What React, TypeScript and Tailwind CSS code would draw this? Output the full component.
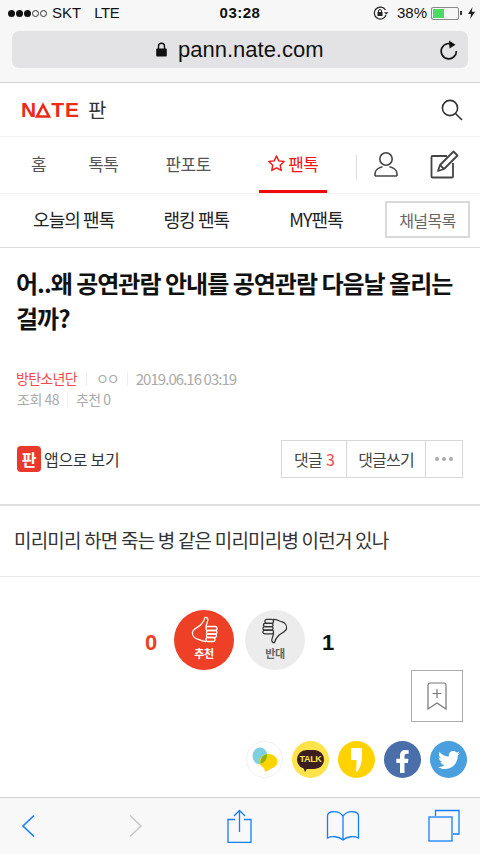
import { FaFacebookF, FaTwitter } from "react-icons/fa";

const KR = "[font-family:'Noto_Sans_CJK_KR','Liberation_Sans',sans-serif]";

function StatusBar() {
  return (
    <div className="flex h-[26px] items-center justify-between pl-[8px] pr-[5px] text-[15px] text-[#111] [font-family:'Liberation_Sans',sans-serif]">
      <div className="flex w-[180px] items-center">
        <div className="flex items-center gap-[1px]">
          {[0, 1, 2].map((i) => (
            <span key={i} className="h-[7px] w-[7px] rounded-full bg-[#111]" />
          ))}
          {[0, 1].map((i) => (
            <span key={i} className="h-[7px] w-[7px] rounded-full border border-[#333]" />
          ))}
        </div>
        <span className="ml-[5px]">SKT</span>
        <span className="ml-[13px] tracking-tight">LTE</span>
      </div>
      <span className="-ml-[3px] text-[15px] font-bold tracking-[0.5px]">03:28</span>
      <div className="flex w-[180px] items-center justify-end">
        <svg width="16" height="14" viewBox="0 0 16 14" fill="none">
          <path d="M12.5 4A6 6 0 1 0 13 9" stroke="#222" strokeWidth="1.2" />
          <path d="M11 6.2 L15.5 6.2 L13.2 8.6Z" fill="#222" />
          <rect x="4.5" y="6" width="5" height="4" fill="#222" />
          <path d="M5.5 6V5a1.5 1.5 0 0 1 3 0v1" stroke="#222" />
        </svg>
        <span className="ml-[8px]">38%</span>
        <div className="ml-[4px] flex h-[13px] w-[28px] items-center rounded-[2px] border border-[#8a8a8a] p-[1px]">
          <div className="h-full w-[11px] bg-[#4cd964]" />
        </div>
        <span className="ml-[1px] h-[4px] w-[2px] bg-[#333]" />
        <svg className="ml-[6px]" width="7" height="12" viewBox="0 0 7 12">
          <path d="M4.5 0 L0 7 L3 7 L2.2 12 L7 4.8 L3.8 4.8Z" fill="#222" />
        </svg>
      </div>
    </div>
  );
}

function UrlBar() {
  return (
    <div className="mx-[12px] mt-[5px] flex h-[37px] items-center rounded-[7px] bg-[#e3e3e5] pr-[10px]">
      <div className="ml-[144px] flex items-center">
        <svg width="11" height="15" viewBox="0 0 11 15">
          <path d="M2.5 7V4.2a3 3 0 0 1 6 0V7" fill="none" stroke="#111" strokeWidth="1.4" />
          <rect x="0.2" y="6.5" width="10.6" height="8" rx="1" fill="#111" />
        </svg>
        <span className="ml-[11px] text-[22px] leading-none text-[#111] [font-family:'Liberation_Sans',sans-serif]">pann.nate.com</span>
      </div>
      <svg className="ml-auto" width="18" height="20" viewBox="0 0 18 20" fill="none">
        <path d="M13.5 5.2A7.6 7.6 0 1 0 16.4 11" stroke="#111" strokeWidth="1.7" />
        <path d="M9 0.5 L15.5 4.8 L9.5 8.5Z" fill="#111" />
      </svg>
    </div>
  );
}

function MainHeader() {
  return (
    <div className="flex h-[54px] items-center justify-between border-b border-[#f2f2f2] pl-[21px] pr-[17px]">
      <div className="flex items-center">
        <div className="flex items-center text-[21px] font-bold leading-none text-[#ee2a14] [font-family:'Liberation_Sans',sans-serif]">
          <span className="tracking-[-1px]">N</span>
          <svg width="16" height="16" viewBox="0 0 16 16" fill="none" stroke="#ee2a14" strokeWidth="2.6" strokeLinejoin="miter">
            <path d="M8 3L14 14.500H2z" />
          </svg>
          <span className="tracking-[1px]">TE</span>
        </div>
        <span className={`ml-[8px] text-[20px] leading-none text-[#333] ${KR}`}>판</span>
      </div>
      <svg width="22" height="22" viewBox="0 0 22 22" fill="none">
        <circle cx="9" cy="9" r="7.6" stroke="#333" strokeWidth="1.6" />
        <path d="M14.5 14.5 L21 21" stroke="#333" strokeWidth="1.6" />
      </svg>
    </div>
  );
}

function TopNav() {
  return (
    <div className={`flex h-[56px] items-stretch text-[17px] tracking-[-0.5px] text-[#555] ${KR}`}>
      <span className="ml-[31px] flex items-center pb-[3px]">홈</span>
      <span className="ml-[42px] flex items-center pb-[3px]">톡톡</span>
      <span className="ml-[47px] flex items-center pb-[3px]">판포토</span>
      <div className="ml-[48px] flex w-[68px] items-center justify-center border-b-[3px] border-[#f00a0a] text-[#f01414]">
        <svg width="19" height="19" viewBox="0 0 24 24" fill="none" stroke="#f01414" strokeWidth="1.8" strokeLinejoin="round">
          <path d="M12 2.5l2.9 6.2 6.8.8-5 4.6 1.3 6.7-6-3.4-6 3.4 1.3-6.7-5-4.6 6.8-.8z" />
        </svg>
        <span className="ml-[2px]">팬톡</span>
      </div>
      <div className="ml-[29px] mt-[18px] h-[25px] w-px bg-[#ddd]" />
      <div className="ml-[17px] flex items-center pb-[3px]">
        <svg width="24" height="26" viewBox="0 0 24 26" fill="none" stroke="#444" strokeWidth="1.6">
          <circle cx="12" cy="8" r="6.2" />
          <path d="M1 25v-2c0-4 4-6.5 7.5-7.2M23 25v-2c0-4-4-6.5-7.5-7.2M1 25h22" />
        </svg>
      </div>
      <div className="ml-[32px] flex items-center pb-[3px]">
        <svg width="29" height="30" viewBox="0 0 29 30" fill="none" stroke="#444" strokeWidth="1.8">
          <path d="M17 7H2.5a1 1 0 0 0-1 1v19.5a1 1 0 0 0 1 1H22a1 1 0 0 0 1-1V14" />
          <path d="M8 22l2-6L23.5 2.5l4 4L14 20z" strokeLinejoin="round" />
          <path d="M10 16l4 4" />
        </svg>
      </div>
    </div>
  );
}

function SubNav() {
  return (
    <div className={`flex h-[55px] items-center border-b border-[#ddd] border-t border-t-[#f2f2f2] text-[18px] tracking-[-0.9px] text-[#222] ${KR}`}>
      <span className="mb-[3px] ml-[33px]">오늘의 팬톡</span>
      <span className="mb-[3px] ml-[49px]">랭킹 팬톡</span>
      <span className="mb-[3px] ml-[60px]">MY팬톡</span>
      <div className="mb-[2px] ml-auto mr-[10px] flex h-[37px] w-[85px] items-center justify-center border-2 border-[#d9d9d9] text-[16px] tracking-[-0.6px] text-[#666]">
        채널목록
      </div>
    </div>
  );
}

function ArticleHead() {
  return (
    <div className={`px-[16px] ${KR}`}>
      <h1 className="mt-[17px] text-[24px] font-bold leading-[35px] tracking-[-1px] text-[#111]">
        어..왜 공연관람 안내를 공연관람 다음날 올리는 걸까?
      </h1>
      <div className="mt-[33px] flex items-center text-[14px] leading-[21px] tracking-[-0.7px] text-[#aaa]">
        <span className="text-[#f04b4b]">방탄소년단</span>
        <span className="mx-[9px] h-[14px] w-px bg-[#eee]" />
        <span className="tracking-[-2px]">ㅇㅇ</span>
        <span className="ml-[9px] mr-[8px] h-[14px] w-px bg-[#eee]" />
        <span className="text-[15px] tracking-[-0.95px]">2019.06.16 03:19</span>
      </div>
      <div className="flex items-center pl-px text-[14px] leading-[21px] tracking-[-0.5px] text-[#aaa]">
        <span>조회 48</span>
        <span className="mx-[8px] h-[14px] w-px bg-[#eee]" />
        <span>추천 0</span>
      </div>
    </div>
  );
}

function ActionRow() {
  return (
    <div className={`mt-[30px] flex items-center justify-between border-b-2 border-[#e2e2e2] pb-[26px] pl-[17px] pr-[17px] ${KR}`}>
      <div className="flex items-center">
        <div className="flex h-[26px] w-[24px] items-center justify-center rounded-[4px] bg-[#e8392c] text-[16px] font-bold leading-none text-white">판</div>
        <span className="ml-[3px] text-[16px] tracking-[-0.3px] text-[#333]">앱으로 보기</span>
      </div>
      <div className="flex h-[38px] w-[182px] border border-[#d8d8d8] text-[16px] tracking-[-0.8px] text-[#444]">
        <div className="flex w-[65px] items-center justify-center border-r border-[#d8d8d8]">
          댓글<span className="ml-[4px] text-[#f04b4b]">3</span>
        </div>
        <div className="flex w-[79px] items-center justify-center border-r border-[#d8d8d8]">댓글쓰기</div>
        <div className="flex flex-1 items-center justify-center gap-[3px]">
          {[0, 1, 2].map((i) => (
            <span key={i} className="h-[4px] w-[4px] rounded-full bg-[#aaa]" />
          ))}
        </div>
      </div>
    </div>
  );
}

function VoteRow() {
  return (
    <div className={`ml-[145px] mt-[33px] flex items-center ${KR}`}>
      <span className="mt-[6px] w-[29px] text-[22px] font-bold leading-none text-[#ee4026] [font-family:'Liberation_Sans',sans-serif]">0</span>
      <div className="flex h-[60px] w-[60px] flex-col items-center rounded-full bg-[#ee4026] pt-[6px]">
        <svg width="27" height="28" viewBox="0 0 27 28" fill="none" stroke="#fff" strokeWidth="1.3" strokeLinejoin="round" strokeLinecap="round">
          <path d="M15 10.500l1.800-6c.5-2-1-3.500-2.800-3-.5 3-2.500 5.500-4.500 7.500S2 13 1.500 16c-.5 3 1.500 6 4.500 7 3 .5 5 2.500 9 2.500" />
          <rect x="15" y="10.500" width="11" height="4" rx="2" />
          <rect x="15.500" y="14.500" width="10.500" height="3.500" rx="1.700" />
          <rect x="15.500" y="18" width="10" height="3.500" rx="1.700" />
          <rect x="15" y="21.500" width="9" height="4" rx="2" />
        </svg>
        <span className="mt-[3px] text-[11px] font-bold leading-[13px] tracking-[-0.3px] text-white">추천</span>
      </div>
      <div className="ml-[11px] flex h-[60px] w-[60px] flex-col items-center rounded-full bg-[#ececec] pt-[6px]">
        <svg width="26" height="29" viewBox="0 0 27 28" fill="none" stroke="#333" strokeWidth="1.3" strokeLinejoin="round" strokeLinecap="round">
          <path d="M12 17.500l-1.800 6c-.5 2 1 3.500 2.800 3 .5-3 2.500-5.500 4.500-7.500s7.500-4 8-7c.5-3-1.500-6-4.500-7-3-.5-5-2.500-9-2.500" />
          <rect x="1" y="13.500" width="11" height="4" rx="2" />
          <rect x="1" y="10" width="10.500" height="3.500" rx="1.700" />
          <rect x="1.500" y="6.500" width="10" height="3.500" rx="1.700" />
          <rect x="3" y="2.500" width="9" height="4" rx="2" />
        </svg>
        <span className="mt-[2px] text-[11px] font-bold leading-[13px] tracking-[-0.3px] text-[#666]">반대</span>
      </div>
      <span className="ml-[17px] mt-[6px] text-[22px] font-bold leading-none text-[#111] [font-family:'Liberation_Sans',sans-serif]">1</span>
    </div>
  );
}

function ShareIcons() {
  return (
    <div className="mr-[13px] mt-[19px] flex justify-end gap-[9px]">
      <div className="flex h-[37px] w-[37px] items-center justify-center rounded-full border border-[#f0f0f0]">
        <svg width="26" height="26" viewBox="0 0 26 26">
          <ellipse cx="8" cy="9" rx="7.500" ry="8.500" fill="#7fcfdc" />
          <ellipse cx="16.500" cy="14.500" rx="9" ry="7.500" fill="#fdd400" />
          <path d="M12 20l1 5 6-3z" fill="#fdd400" />
          <path d="M8.500 16.500c3.500 0 6.500-3.500 6.500-9.200c-4 .5-6.800 4-6.500 9.200z" fill="#8ab31a" />
        </svg>
      </div>
      <div className="flex h-[37px] w-[37px] flex-col items-center justify-center rounded-full bg-[#ffe34a]">
        <div className="relative flex h-[19px] w-[27px] items-center justify-center rounded-full bg-[#3c1e1e] text-[9px] font-bold leading-none tracking-[-0.3px] text-[#ffe34a] [font-family:'Liberation_Sans',sans-serif]">
          TALK
          <span className="absolute bottom-[-3px] left-[6px] h-0 w-0 border-l-[2px] border-r-[3px] border-t-[5px] border-l-transparent border-r-transparent border-t-[#3c1e1e]" />
        </div>
      </div>
      <div className="flex h-[37px] w-[37px] items-center justify-center rounded-full bg-[#ffd200]">
        <svg width="11" height="24" viewBox="0 0 11 24">
          <path d="M0 0h11v9c0 6-2 11-5 15l-1-1c.5-4 .5-7 .5-11H0z" fill="#fff" />
        </svg>
      </div>
      <div className="flex h-[37px] w-[37px] items-center justify-center rounded-full bg-[#4a6ea9] pt-[3px]">
        <FaFacebookF className="h-[23px] w-[15px] text-white" />
      </div>
      <div className="flex h-[37px] w-[37px] items-center justify-center rounded-full bg-[#4a9fdf]">
        <FaTwitter className="h-[22px] w-[24px] text-white" />
      </div>
    </div>
  );
}

function BottomBar() {
  return (
    <div className="mt-auto flex h-[57px] items-center border-t border-[#cfcfcf] bg-[#f8f8f8] pb-[1px]">
      <svg className="ml-[21px]" width="14" height="24" viewBox="0 0 14 24" fill="none" stroke="#147efb" strokeWidth="1.6">
        <path d="M13 1.500L2 12l11 10.500" />
      </svg>
      <svg className="ml-[94px]" width="14" height="24" viewBox="0 0 14 24" fill="none" stroke="#c8c8c8" strokeWidth="1.6">
        <path d="M1 1.500L12 12 1 22.500" />
      </svg>
      <svg className="ml-[84px]" width="25" height="34" viewBox="0 0 25 34" fill="none" stroke="#147efb" strokeWidth="1.3">
        <path d="M8 10.500H1v23h23v-23H17M12.500 23V1.500M7 7l5.500-5.500L18 7" />
      </svg>
      <svg className="ml-[74px]" width="34" height="32" viewBox="0 0 34 32" fill="none" stroke="#147efb" strokeWidth="1.3">
        <path d="M17 6C14 2 9 1 5 2c-2 .5-3.500 2-3.500 4v22c4-2 11-2 15.500 2 4.500-4 11.500-4 15.500-2V6c0-2-1.500-3.500-3.500-4-4-1-9 0-12 4zM17 6v24" />
      </svg>
      <svg className="ml-[68px]" width="32" height="33" viewBox="0 0 32 33" fill="none" stroke="#147efb" strokeWidth="1.3">
        <rect x="1" y="8" width="23" height="24" />
        <path d="M7.500 7V1.500h23.500v23.500H25" />
      </svg>
    </div>
  );
}

export default function App() {
  return (
    <div className="flex h-[854px] w-[480px] flex-col overflow-hidden bg-white">
      <div className="h-[83px] border-b border-[#d4d4d4] bg-[#f7f7f7]">
        <StatusBar />
        <UrlBar />
      </div>
      <MainHeader />
      <TopNav />
      <SubNav />
      <ArticleHead />
      <ActionRow />
      <p className={`flex h-[71px] items-center border-b border-[#e9e9e9] px-[14px] pb-[2px] text-[19px] tracking-[-0.8px] text-[#333] ${KR}`}>
        미리미리 하면 죽는 병 같은 미리미리병 이런거 있나
      </p>
      <VoteRow />
      <div className="mr-[17px] flex justify-end">
        <div className="flex h-[52px] w-[52px] items-center justify-center border border-[#aaa]">
          <svg width="20" height="28" viewBox="0 0 20 28" fill="none" stroke="#777" strokeWidth="1.2">
            <path d="M1 27V3a2 2 0 0 1 2-2h14a2 2 0 0 1 2 2v24l-9-6zM10 7v9M5.500 11.500h9" />
          </svg>
        </div>
      </div>
      <ShareIcons />
      <BottomBar />
    </div>
  );
}
